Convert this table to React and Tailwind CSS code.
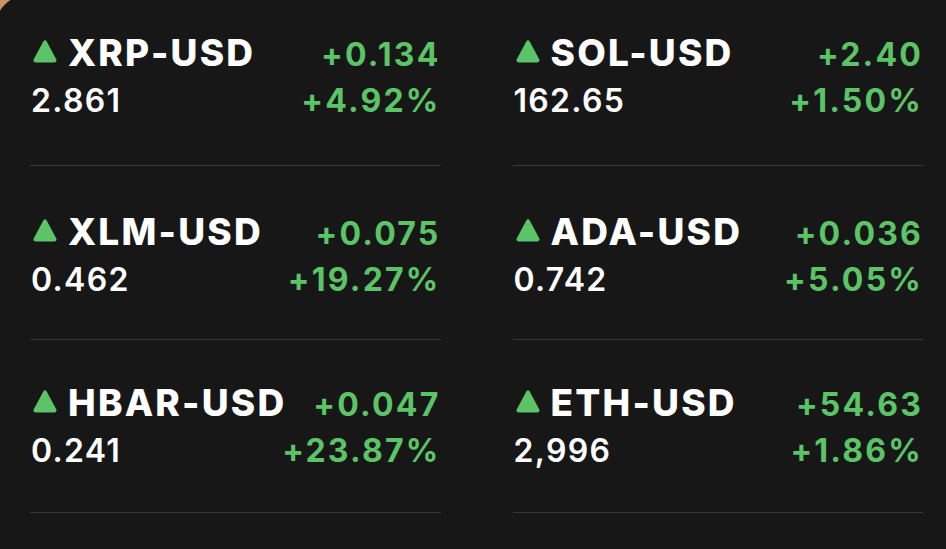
import React from 'react';

const quotes = [
  { symbol: 'XRP-USD', price: '2.861', change: '+0.134', pct: '+4.92%' },
  { symbol: 'SOL-USD', price: '162.65', change: '+2.40', pct: '+1.50%' },
  { symbol: 'XLM-USD', price: '0.462', change: '+0.075', pct: '+19.27%' },
  { symbol: 'ADA-USD', price: '0.742', change: '+0.036', pct: '+5.05%' },
  { symbol: 'HBAR-USD', price: '0.241', change: '+0.047', pct: '+23.87%' },
  { symbol: 'ETH-USD', price: '2,996', change: '+54.63', pct: '+1.86%' },
];

// vertical padding per row, so the dividers land where they do in the widget
const rowPadding = ['pt-[41px] pb-[48px]', 'pt-[47px] pb-[43px]', 'pt-[44px] pb-[45px]'];

const UpArrow = () => (
  <svg width="24" height="24" viewBox="0 0 24 24" className="self-center shrink-0 mb-[3px]">
    <path
      d="M10.3 2.6 Q12 0 13.7 2.6 L23.2 20.2 Q24.4 23.5 21 23.5 L3 23.5 Q-0.4 23.5 0.8 20.2 Z"
      fill="#5bc467"
    />
  </svg>
);

const QuoteCell = ({ quote, row }) => (
  <div className={`border-b border-[#383838] pl-[3px] ${rowPadding[row]}`}>
    <div className="flex items-baseline justify-between">
      <div className="flex items-baseline gap-[11px]">
        <UpArrow />
        <span className="text-[37px] leading-none font-extrabold text-white tracking-[2.2px]">
          {quote.symbol}
        </span>
      </div>
      <span className="text-[32px] leading-none font-bold text-[#5bc467] tracking-[2.2px]">
        {quote.change}
      </span>
    </div>
    <div className="flex items-baseline justify-between mt-[14px]">
      <span className="-ml-[2px] text-[32px] leading-none font-semibold text-white tracking-[1.3px]">
        {quote.price}
      </span>
      <span className="text-[32px] leading-none font-bold text-[#5bc467] tracking-[2.2px]">
        {quote.pct}
      </span>
    </div>
  </div>
);

export default function App() {
  return (
    <div
      className="w-[946px] h-[549px] overflow-hidden bg-[#c99462]"
      style={{ fontFamily: 'Inter, "Noto Sans", sans-serif' }}
    >
      {/* widget card, its top-left corner just clipped by the screenshot */}
      <div className="-ml-[7px] -mt-[7px] h-[570px] rounded-tl-[40px] bg-[#171717] pl-[37px] pr-[23px]">
        <div className="grid grid-cols-2 gap-x-[72px]">
          {quotes.map((q, i) => (
            <QuoteCell key={q.symbol} quote={q} row={Math.floor(i / 2)} />
          ))}
        </div>
      </div>
    </div>
  );
}
